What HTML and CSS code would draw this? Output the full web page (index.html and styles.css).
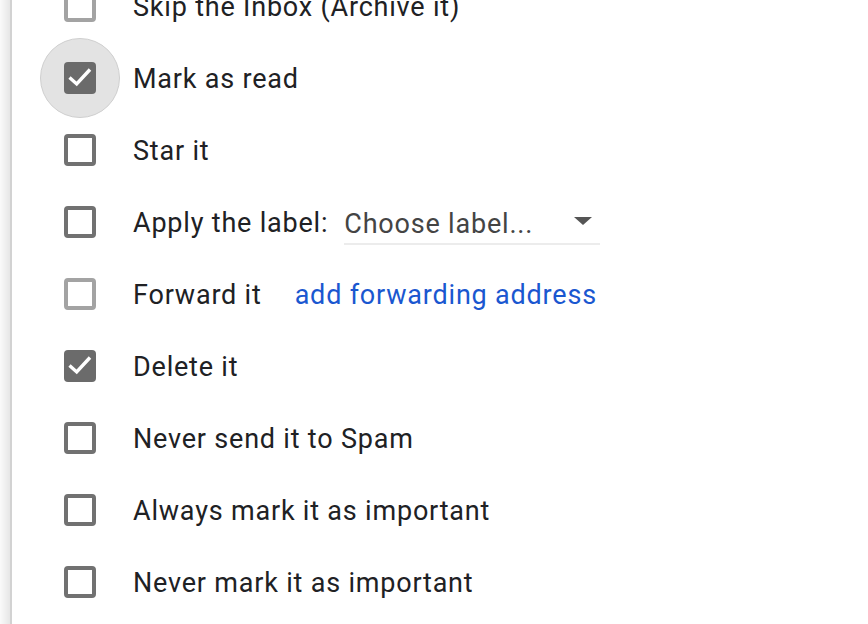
FILE: index.html
```html
<!DOCTYPE html>
<html>
<head>
<meta charset="utf-8">
<link rel="stylesheet" href="styles.css">
</head>
<body>
<div class="page">
  <div class="shade"></div>
  <div class="panel">
    <div class="list">
      <div class="row">
        <div class="cbwrap"><span class="cb disabled"></span></div>
        <span class="label">Skip the Inbox (Archive it)</span>
      </div>
      <div class="row">
        <div class="cbwrap focus"><span class="cb checked"><svg viewBox="0 0 32 32" width="32" height="32"><path d="M5.5 15.5l7.2 6.4L26 7.5" fill="none" stroke="#fff" stroke-width="3.4"/></svg></span></div>
        <span class="label">Mark as read</span>
      </div>
      <div class="row">
        <div class="cbwrap"><span class="cb"></span></div>
        <span class="label">Star it</span>
      </div>
      <div class="row">
        <div class="cbwrap"><span class="cb"></span></div>
        <span class="label">Apply the label:</span>
        <div class="select"><span class="select-text">Choose label...</span><span class="arrow"></span></div>
      </div>
      <div class="row">
        <div class="cbwrap"><span class="cb disabled"></span></div>
        <span class="label">Forward it</span>
        <a class="link" href="#">add forwarding address</a>
      </div>
      <div class="row">
        <div class="cbwrap"><span class="cb checked"><svg viewBox="0 0 32 32" width="32" height="32"><path d="M5.5 15.5l7.2 6.4L26 7.5" fill="none" stroke="#fff" stroke-width="3.4"/></svg></span></div>
        <span class="label">Delete it</span>
      </div>
      <div class="row">
        <div class="cbwrap"><span class="cb"></span></div>
        <span class="label">Never send it to Spam</span>
      </div>
      <div class="row">
        <div class="cbwrap"><span class="cb"></span></div>
        <span class="label">Always mark it as important</span>
      </div>
      <div class="row">
        <div class="cbwrap"><span class="cb"></span></div>
        <span class="label">Never mark it as important</span>
      </div>
    </div>
  </div>
</div>
</body>
</html>
```
FILE: styles.css
```css
html, body {
  margin: 0;
  padding: 0;
  background: #fff;
  overflow: hidden;
}
body {
  font-family: Roboto, "Liberation Sans", sans-serif;
}
.page {
  display: flex;
  width: 868px;
  height: 624px;
  overflow: hidden;
}
.shade {
  width: 10px;
  flex: none;
  background: linear-gradient(to right, #fafafa, #e6e6e6);
}
.panel {
  flex: 1;
  border-left: 2px solid #d2d2d2;
  background: #fff;
}
.list {
  margin-top: -30px;
  padding-left: 28px;
}
.row {
  display: flex;
  align-items: center;
  height: 72px;
}
.cbwrap {
  position: relative;
  width: 80px;
  height: 72px;
  display: flex;
  align-items: center;
  justify-content: center;
  flex: none;
}
.cbwrap.focus::before {
  content: "";
  position: absolute;
  left: 0;
  top: -4px;
  width: 78px;
  height: 78px;
  border-radius: 50%;
  background: #e3e3e3;
  border: 1px solid #cfcfcf;
}
.cb {
  position: relative;
  box-sizing: border-box;
  width: 32px;
  height: 32px;
  border: 4px solid #717171;
  border-radius: 4px;
  background: #fff;
}
.cb.disabled {
  border-color: #a3a3a3;
}
.cb.checked {
  background: #6b6b6b;
  border: none;
}
.cb svg {
  display: block;
}
.label {
  margin-left: 13px;
  margin-top: 2px;
  font-size: 27px;
  color: #202124;
  letter-spacing: 0.8px;
  white-space: nowrap;
}
.select {
  margin-left: 16px;
  width: 256px;
  height: 42px;
  box-sizing: border-box;
  border-bottom: 2px solid #ececec;
  display: flex;
  align-items: center;
  justify-content: space-between;
  margin-top: 4px;
}
.select-text {
  font-size: 27px;
  color: #444;
  letter-spacing: 0.8px;
  margin-top: 2px;
}
.arrow {
  width: 0;
  height: 0;
  border-left: 9px solid transparent;
  border-right: 9px solid transparent;
  border-top: 8px solid #555;
  margin-right: 8px;
  margin-top: -4px;
}
.link {
  margin-left: 33px;
  margin-top: 2px;
  font-size: 27px;
  color: #1a57d0;
  text-decoration: none;
  letter-spacing: 0.8px;
}
```
